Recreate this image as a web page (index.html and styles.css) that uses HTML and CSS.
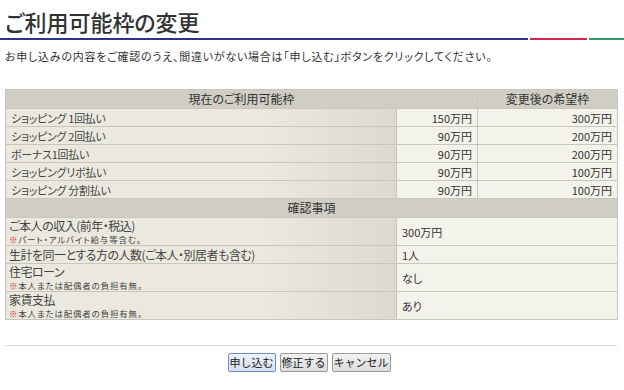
FILE: index.html
```html
<!doctype html>
<html lang="ja">

<head>
  <meta charset="utf-8">
  <title>ご利用可能枠の変更</title>
  <link rel="stylesheet" href="styles.css">
</head>

<body>
  <header class="page-head">
    <h1>ご利用可能枠の変更</h1>
    <div class="head-line">
      <span class="line-blue"></span>
      <span class="line-red"></span>
      <span class="line-green"></span>
    </div>
  </header>

  <main>
    <p class="lead">お申し込みの内容をご確認のうえ、間違いがない場合は「申し込む」ボタンをクリックしてください。</p>

    <table class="confirm">
      <colgroup>
        <col class="col-label">
        <col class="col-now">
        <col class="col-new">
      </colgroup>
      <tr>
        <th colspan="2">現在のご利用可能枠</th>
        <th>変更後の希望枠</th>
      </tr>
      <tr>
        <td class="label">ショッピング 1回払い</td>
        <td class="num">150万円</td>
        <td class="num">300万円</td>
      </tr>
      <tr>
        <td class="label">ショッピング 2回払い</td>
        <td class="num">90万円</td>
        <td class="num">200万円</td>
      </tr>
      <tr>
        <td class="label">ボーナス1回払い</td>
        <td class="num">90万円</td>
        <td class="num">200万円</td>
      </tr>
      <tr>
        <td class="label">ショッピングリボ払い</td>
        <td class="num">90万円</td>
        <td class="num">100万円</td>
      </tr>
      <tr>
        <td class="label">ショッピング 分割払い</td>
        <td class="num">90万円</td>
        <td class="num">100万円</td>
      </tr>
      <tr>
        <th colspan="3">確認事項</th>
      </tr>
      <tr class="tall">
        <td class="label big">ご本人の収入(前年・税込)<span class="note"><em>※</em>パート・アルバイト給与等含む。</span></td>
        <td class="val" colspan="2">300万円</td>
      </tr>
      <tr>
        <td class="label big">生計を同一とする方の人数(ご本人・別居者も含む)</td>
        <td class="val" colspan="2">1人</td>
      </tr>
      <tr class="tall">
        <td class="label big">住宅ローン<span class="note"><em>※</em>本人または配偶者の負担有無。</span></td>
        <td class="val" colspan="2">なし</td>
      </tr>
      <tr class="tall">
        <td class="label big">家賃支払<span class="note"><em>※</em>本人または配偶者の負担有無。</span></td>
        <td class="val" colspan="2">あり</td>
      </tr>
    </table>

    <hr class="sep">

    <div class="actions">
      <button type="button" class="btn focus">申し込む</button>
      <button type="button" class="btn">修正する</button>
      <button type="button" class="btn">キャンセル</button>
    </div>
  </main>
</body>

</html>
```

FILE: styles.css
```css
*,
*::before,
*::after {
  box-sizing: border-box;
}

html {
  font-family: "Noto Sans CJK JP", "Liberation Sans", sans-serif;
  font-size: 12px;
  font-feature-settings: "palt";
  color: #333;
}

body {
  margin: 0;
  background: #fff;
}

.page-head h1 {
  margin: 0;
  padding: 6px 5px 0;
  height: 38px;
  font-size: 22px;
  line-height: 30px;
  font-weight: 500;
  color: #333;
}

.head-line {
  display: flex;
  gap: 2px;
  height: 2px;
}

.line-blue {
  width: 528px;
  background: #2a3488;
}

.line-red {
  width: 57px;
  background: #d0284f;
}

.line-green {
  flex: 1;
  background: #2e9a6c;
}

main {
  padding: 0 7px 0 5px;
}

.lead {
  margin: 8px 0 0;
  font-size: 11px;
  line-height: 16px;
  letter-spacing: 0.75px;
  color: #333;
}

.confirm {
  margin-top: 25px;
  width: 612px;
  border-collapse: collapse;
  table-layout: fixed;
  font-size: 11px;
}

.col-label {
  width: 391px;
}

.col-now {
  width: 81px;
}

.col-new {
  width: 140px;
}

.confirm th,
.confirm td {
  border: 1px solid #c9c7bc;
  height: 18px;
  padding: 0 5px;
  line-height: 16px;
  font-weight: normal;
  white-space: nowrap;
}

.confirm th {
  background: #d0cec4;
  color: #333;
  text-align: center;
  font-size: 12px;
  height: 19px;
}

.confirm td.label {
  background: linear-gradient(to right, #ebe9df 65%, #dcdacf);
  color: #444;
  letter-spacing: -0.3px;
}

.confirm td.big {
  font-size: 12px;
  padding-left: 3px;
  letter-spacing: -0.5px;
}

.confirm td.num {
  background: #f3f2eb;
  text-align: right;
}

.confirm td.val {
  background: #f3f2eb;
  padding-left: 5px;
}

.confirm tr.tall td {
  height: 28px;
}

.note {
  display: block;
  font-size: 8.5px;
  line-height: 11px;
  letter-spacing: 0.8px;
  color: #444;
}

.note em {
  font-style: normal;
  color: #e0202a;
}

.sep {
  margin: 25px 0 0;
  border: 0;
  border-top: 1px solid #ddd;
}

.actions {
  display: flex;
  justify-content: center;
  gap: 4px;
  margin-top: 7px;
  padding-right: 4px;
}

.btn {
  height: 19px;
  padding: 0 1px;
  font-family: inherit;
  font-size: 11px;
  line-height: 15px;
  color: #222;
  background: linear-gradient(#f2f2f2, #dcdcdc);
  border: 1px solid #9a9a9a;
  border-radius: 2px;
}

.btn.focus {
  border-color: #6c8fc8;
  background: linear-gradient(#eef3fa, #d6e0ee);
}
```
